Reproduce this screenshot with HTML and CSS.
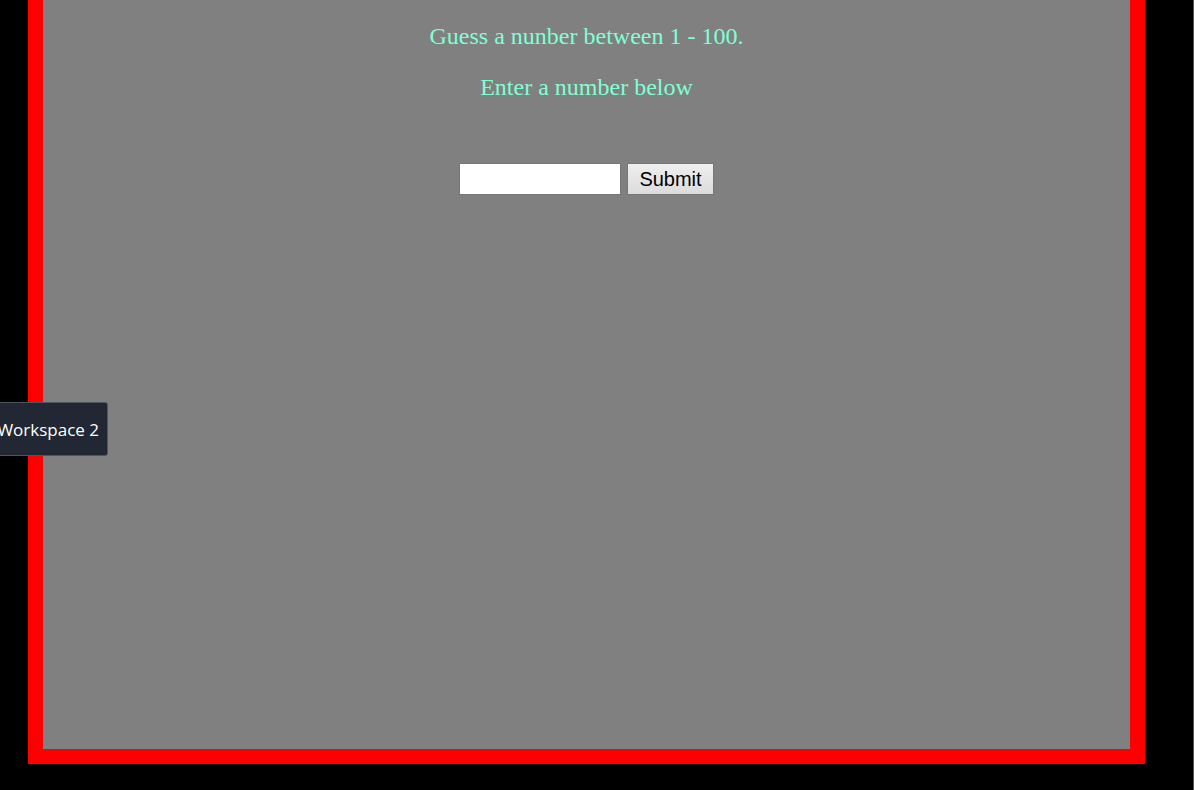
FILE: index.html
```html
<!DOCTYPE html>
<html>
<head>
<meta charset="utf-8">
<link rel="stylesheet" href="styles.css">
</head>
<body>
<div class="frame">
  <div class="game">
    <p class="line first">Guess a nunber between 1 - 100.</p>
    <p class="line second">Enter a number below</p>
    <form class="guess-form">
      <input class="guess-input" type="text">
      <button class="submit-btn" type="button">Submit</button>
    </form>
  </div>
</div>
<div class="workspace-tip">Workspace 2</div>
</body>
</html>
```
FILE: styles.css
```css
html, body {
  margin: 0;
  padding: 0;
  background: #000;
  height: 790px;
  overflow: hidden;
}
body {
  border-right: 1px solid #555;
  box-sizing: border-box;
  width: 1194px;
}
.frame {
  margin-left: 28px;
  width: 1117px;
  height: 764px;
  box-sizing: border-box;
  border: 15px solid #ff0000;
  border-top: 0;
  background: #808080;
}
.game {
  display: flex;
  flex-direction: column;
  align-items: center;
  font-family: "Liberation Serif", "Times New Roman", serif;
  color: #7fffd4;
}
.line {
  margin: 0;
  font-size: 24px;
  line-height: 28px;
}
.first {
  margin-top: 22px;
}
.second {
  margin-top: 23px;
}
.guess-form {
  margin-top: 62px;
  display: flex;
  gap: 6px;
}
.guess-input {
  width: 162px;
  height: 32px;
  box-sizing: border-box;
  border: 1px solid #767676;
  background: #fff;
  padding: 2px 4px;
  font-size: 20px;
  margin: 0;
}
.submit-btn {
  width: 87px;
  height: 32px;
  box-sizing: border-box;
  border: 1px solid #767676;
  background: linear-gradient(#efefef, #dcdcdc);
  font-family: "Liberation Sans", Arial, sans-serif;
  font-size: 20px;
  color: #000;
  padding: 0;
  margin: 0;
}
.workspace-tip {
  position: fixed;
  left: -12px;
  top: 402px;
  width: 120px;
  height: 54px;
  box-sizing: border-box;
  background: #212733;
  border: 1px solid #4b5563;
  border-radius: 3px;
  color: #fff;
  font-family: "Open Sans", "Noto Sans", sans-serif;
  font-size: 17px;
  display: flex;
  align-items: center;
  justify-content: flex-end;
  padding-right: 8px;
}
```
